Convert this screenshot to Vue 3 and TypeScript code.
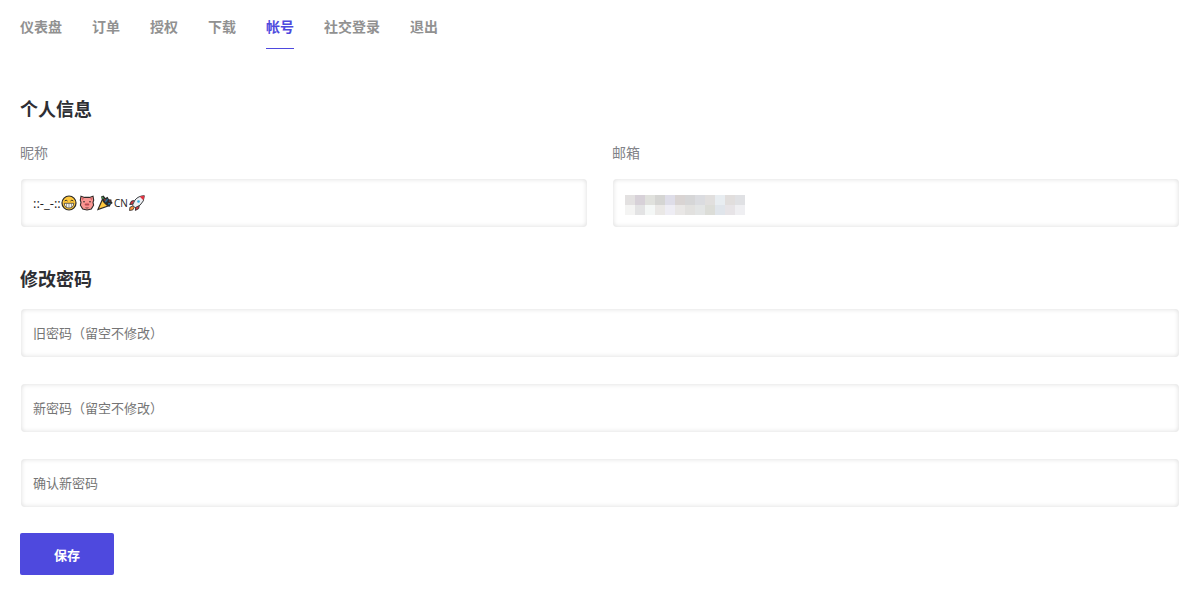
<script setup lang="ts">
import { ref } from 'vue'

interface NavItem {
  label: string
  active?: boolean
}

const navItems: NavItem[] = [
  { label: '仪表盘' },
  { label: '订单' },
  { label: '授权' },
  { label: '下载' },
  { label: '帐号', active: true },
  { label: '社交登录' },
  { label: '退出' },
]

const nickname = ref('::-_-::')
const email = ref('')
const passwords = ref([
  { id: 'old', placeholder: '旧密码（留空不修改）', value: '' },
  { id: 'new', placeholder: '新密码（留空不修改）', value: '' },
  { id: 'confirm', placeholder: '确认新密码', value: '' },
])

const maskColors: string[] = [
  '#e3e1e1', '#d7d1d8', '#e0e1dd', '#d5d5d3', '#dedde8', '#d9d4d3', '#d6d6d7', '#dbdce0', '#e1dfde', '#e8edf1', '#e1dedd', '#e0e1e4',
  '#f4f4f3', '#e3e3e4', '#f4f7f6', '#eae8e6', '#eeedf4', '#e9e7e6', '#e2e1df', '#e3e5e5', '#dcddd8', '#e0e5eb', '#e7e4e7', '#efeff2',
]
</script>

<template>
  <main class="account">
    <nav class="tabs">
      <a v-for="item in navItems" :key="item.label" href="#" :class="{ active: item.active }">{{ item.label }}</a>
    </nav>

    <form @submit.prevent>
      <section class="profile">
        <h2>个人信息</h2>
        <div class="columns">
          <div>
            <label for="nickname">昵称</label>
            <div class="field">
              <input id="nickname" v-model="nickname" type="text" />
              <div class="suffix">
                <svg viewBox="0 0 16 16" aria-hidden="true">
                  <circle cx="8" cy="8" r="7" fill="#ffc83d" stroke="#2b2926" stroke-width="1.2" />
                  <path d="M3.700 6q1.400-1.700 2.800 0M9.500 6q1.400-1.700 2.800 0" fill="none" stroke="#2b2926" stroke-width=".9" />
                  <path d="M3.200 8.300h9.600q-.4 4.700-4.800 4.700T3.200 8.300z" fill="#f4f4ef" stroke="#2b2926" stroke-width=".7" />
                  <path d="M5.500 8.500v3.500M8 8.500v4M10.500 8.500v3.500" stroke="#66645f" stroke-width=".6" />
                </svg>
                <svg viewBox="0 0 16 16" aria-hidden="true">
                  <path d="M2 1.200l3.500 1.200h5L14 1.200l.7 4.100-.7 1.900.6 3-2.300 3.800-4.300 1-4.300-1-2.300-3.800.6-3-.7-1.900z" fill="#fa9793" stroke="#302927" stroke-width="1.100" />
                  <path d="M2.800 2.200l2.400 1.300-2.200 1.900zM13.200 2.200l-2.400 1.300 2.200 1.900z" fill="#d9696b" />
                  <circle cx="5" cy="6.700" r=".8" fill="#302927" />
                  <circle cx="11" cy="6.700" r=".8" fill="#302927" />
                  <ellipse cx="8" cy="9.500" rx="2.500" ry="1.800" fill="#ea6b70" />
                  <path d="M7 8.900v1.200M9 8.900v1.200M6.500 12.700q1.500.8 3 0" fill="none" stroke="#512e2e" stroke-width=".8" />
                </svg>
                <svg viewBox="0 0 16 16" aria-hidden="true">
                  <path d="M5.500 4.200L.9 14.600l10.800-3.800z" fill="#ffc83d" stroke="#302b26" stroke-width="1.200" />
                  <path d="M4 1.500l2.500-1 2 2.600 2-1.300 1.400 2.500 2.500.3.200 2 1.100 1.500-2 1.400-1 2.200-3.200-1.200L6 7 4.700 4z" fill="#2b2b2b" />
                  <path d="M5 1.800l1.400 2" stroke="#4f9b50" stroke-width="1.200" />
                  <path d="M8.300 7l2.400-3M11 9l2.400-.5" stroke="#236f9c" stroke-width="1.300" />
                  <path d="M7.500 4.300l1 1.200M12.400 5.700l.8.700" stroke="#b94545" stroke-width="1.200" />
                </svg>
                <span class="region">CN</span>
                <svg viewBox="0 0 16 16" aria-hidden="true">
                  <path d="M5.300 5.600L2.500 6 .7 9.500l3-.3M10.200 10.800L9.700 13.600l-3.300 1.800.3-3" fill="#df3441" stroke="#282a2e" stroke-width=".9" />
                  <path d="M3.700 11L.9 12.300.5 15.500l3.300-.6L5.200 12.500z" fill="#ff963c" stroke="#282a2e" stroke-width=".8" />
                  <path d="M15.300.7Q9.500.8 6 5l-2.500 5.100 2.600 2.600 5-2.600Q15.400 6.400 15.300.7z" fill="#eef1f5" stroke="#282a2e" stroke-width=".9" />
                  <path d="M10.800 1.800Q12.700.8 15.300.7q0 2.500-1 4.500z" fill="#df3441" />
                  <circle cx="9.500" cy="6.500" r="1.300" fill="#31a8df" />
                </svg>
              </div>
            </div>
          </div>
          <div>
            <label for="email">邮箱</label>
            <div class="field">
              <input id="email" v-model="email" type="email" />
              <div class="mask" aria-hidden="true">
                <i v-for="(color, index) in maskColors" :key="index" :style="{ background: color }"></i>
              </div>
            </div>
          </div>
        </div>
      </section>

      <section>
        <h2>修改密码</h2>
        <div class="passwords">
          <div v-for="item in passwords" :key="item.id" class="field">
            <input :id="item.id" v-model="item.value" type="password" :placeholder="item.placeholder" :aria-label="item.placeholder" />
          </div>
        </div>
      </section>

      <button type="submit">保存</button>
    </form>
  </main>
</template>

<style>
body {
  margin: 0;
  background: #fff;
}
</style>

<style scoped>
.account {
  padding: 15px 12px 24px 20px;
  color: #2d2e33;
  font: 14px/24px "Open Sans", "Noto Sans CJK SC", sans-serif;
}

.tabs {
  display: flex;
  flex-wrap: wrap;
  gap: 30px;
  margin-bottom: 44px;
}

.tabs a {
  padding-bottom: 9px;
  border-bottom: 1px solid transparent;
  color: #919191;
  font-weight: 700;
  text-decoration: none;
}

.tabs a.active {
  border-color: #4e49de;
  color: #4e49de;
}

h2 {
  margin: 0;
  font-size: 18px;
  line-height: 32px;
}

.profile {
  margin-bottom: 36px;
}

.columns {
  display: grid;
  grid-template-columns: 1fr 1fr;
  gap: 24px;
}

label {
  display: block;
  margin: 16px 0 14px;
  color: #818288;
}

.field {
  position: relative;
  margin: 0 1px;
}

input {
  display: block;
  box-sizing: border-box;
  width: 100%;
  height: 48px;
  padding: 0 12px;
  border: 0;
  border-radius: 4px;
  outline: 0;
  background: #fff;
  box-shadow: inset 0 0 5px rgba(0, 0, 0, 0.15);
  color: #222;
  font: 13px "Open Sans", "Noto Sans CJK SC", sans-serif;
}

input::placeholder {
  color: #757575;
  opacity: 1;
}

.suffix {
  position: absolute;
  top: 16px;
  left: 40px;
  display: flex;
  align-items: center;
  gap: 2px;
  height: 16px;
  pointer-events: none;
}

.suffix svg {
  width: 16px;
  height: 16px;
}

.region {
  margin: 0 -1px;
  color: #222;
  font-size: 10px;
  line-height: 16px;
}

.mask {
  position: absolute;
  top: 16px;
  left: 12px;
  display: grid;
  grid-template-columns: repeat(12, 10px);
  grid-auto-rows: 10px;
  pointer-events: none;
}

.passwords {
  display: grid;
  gap: 27px;
  margin: 14px 0 26px;
}

button {
  display: block;
  height: 42px;
  padding: 0 34px;
  border: 0;
  border-radius: 2px;
  background: #4e49de;
  color: #fff;
  font: 700 13px "Open Sans", "Noto Sans CJK SC", sans-serif;
}
</style>
